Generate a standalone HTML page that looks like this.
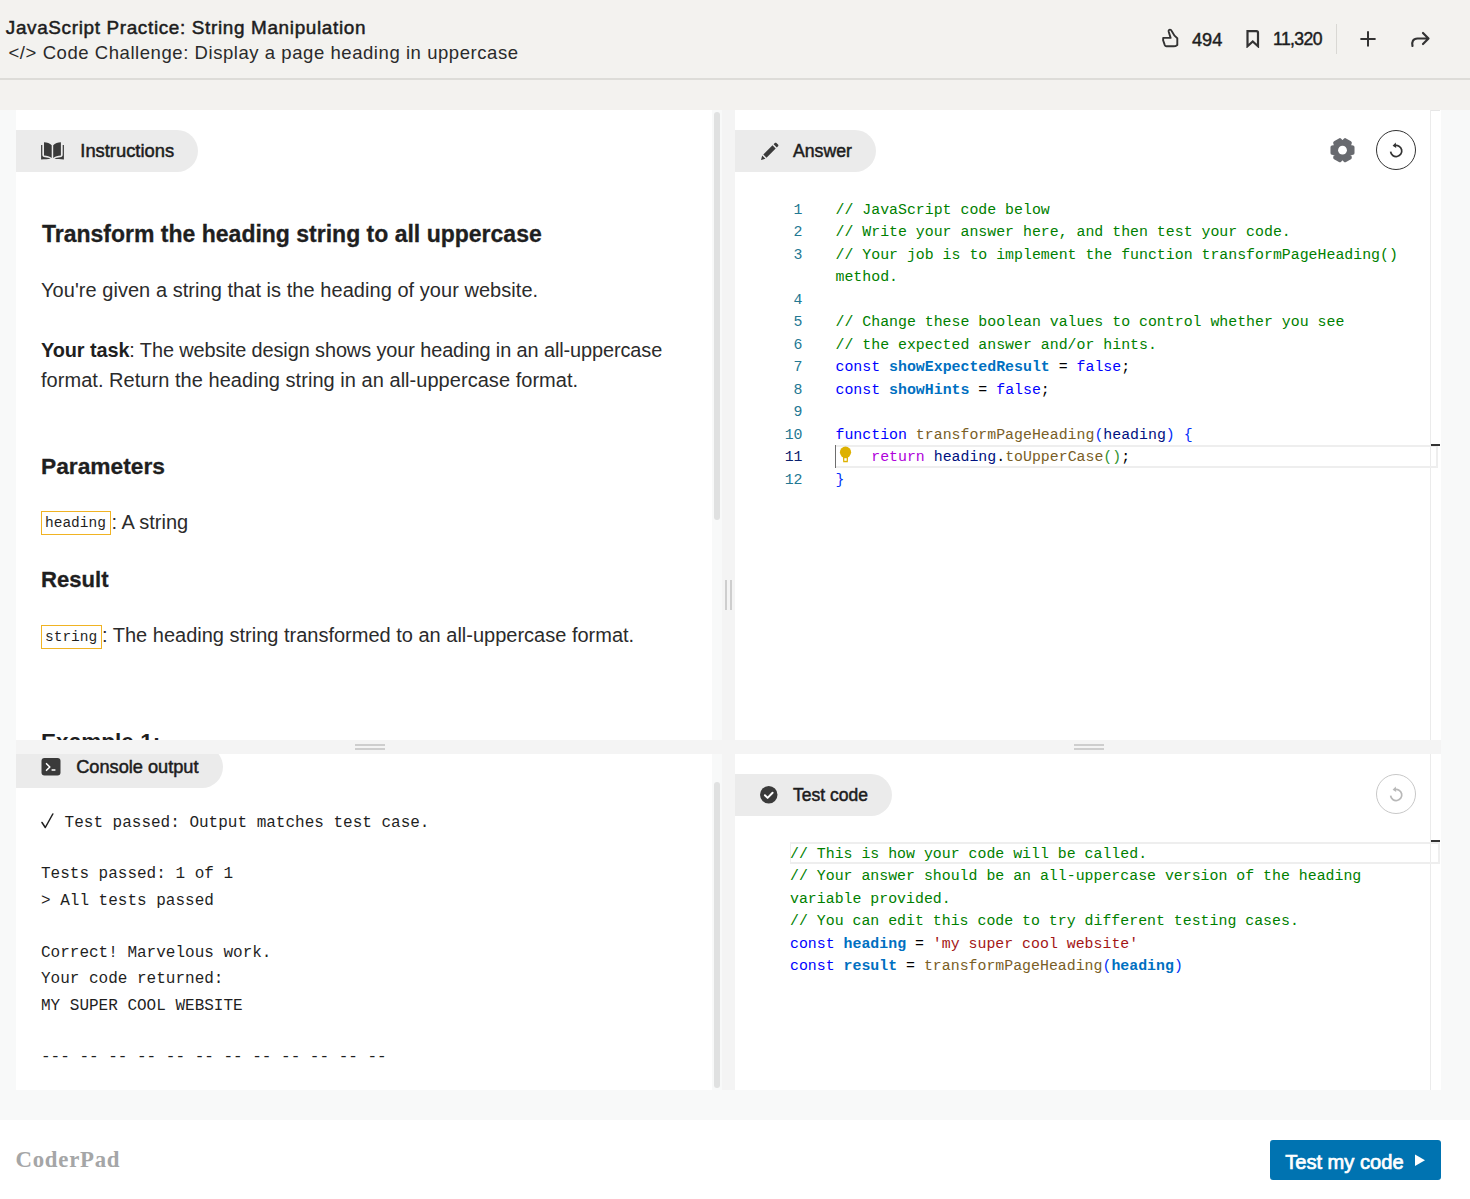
<!DOCTYPE html><html><head><meta charset="utf-8"><style>
html,body{margin:0;padding:0;width:1470px;height:1199px;overflow:hidden;background:#fff;font-family:"Liberation Sans",sans-serif}
#r>div,#r>svg{position:absolute;box-sizing:content-box}
</style></head><body><div id="r" style="position:relative;width:1470px;height:1199px;overflow:hidden">
<div style="left:0px;top:0px;width:1470px;height:78px;background:#f3f2ef;"></div>
<div style="left:0px;top:78px;width:1470px;height:2px;background:#dddcd8;"></div>
<div style="left:0px;top:80px;width:1470px;height:30px;background:#f3f2ef;"></div>
<div style="left:0px;top:110px;width:1470px;height:980px;background:#f8f9f9;"></div>
<div style="left:0px;top:1090px;width:1470px;height:30px;background:#f8f9f9;"></div>
<div style="left:0px;top:1120px;width:1470px;height:79px;background:#ffffff;"></div>
<div style="left:5.8px;top:15.45px;font-family:'Liberation Sans', sans-serif;font-size:18.9px;line-height:25px;font-weight:400;color:#1d1d1d;letter-spacing:0.66px;white-space:pre;-webkit-text-stroke:0.5px #1d1d1d;">JavaScript Practice: String Manipulation</div>
<div style="left:8.5px;top:40.59px;font-family:'Liberation Sans', sans-serif;font-size:18.5px;line-height:24px;font-weight:400;color:#2a2a2a;letter-spacing:0.56px;white-space:pre;">&lt;/&gt; Code Challenge: Display a page heading in uppercase</div>
<svg style="left:1160px;top:27px" width="22" height="23" viewBox="0 0 22 23"><path d="M3.2 10.9 L10.6 10.9 L8.7 4.8 C8.3 3.4 9.1 2.6 10 2.6 C10.9 2.6 11.4 3.3 11.9 4.3 C13.3 7.3 15.1 9.6 17.3 11.3 L17.3 17.9 C16.2 18.8 15.1 19.3 13.6 19.3 L6.4 19.3 C5.6 19.3 5.1 18.8 4.8 18.1 L3.1 13.2 Z" fill="none" stroke="#333" stroke-width="1.9" stroke-linejoin="round"/></svg>
<div style="left:1192px;top:27.69px;font-family:'Liberation Sans', sans-serif;font-size:18.2px;line-height:24px;font-weight:400;color:#1d1d1d;white-space:pre;-webkit-text-stroke:0.45px #1d1d1d;">494</div>
<svg style="left:1246px;top:30px" width="14" height="18" viewBox="0 0 14 18"><path d="M1.5 1.2 H10.5 Q12 1.2 12 2.7 V16.2 L6.75 11.4 L1.5 16.2 Z" fill="none" stroke="#333" stroke-width="2.2" stroke-linejoin="miter"/></svg>
<div style="left:1273px;top:28.40px;font-family:'Liberation Sans', sans-serif;font-size:17.6px;line-height:23px;font-weight:400;color:#1d1d1d;letter-spacing:-0.6px;white-space:pre;-webkit-text-stroke:0.45px #1d1d1d;">11,320</div>
<div style="left:1336px;top:24px;width:1px;height:30px;background:#d9d8d4;"></div>
<svg style="left:1359px;top:30px" width="18" height="18" viewBox="0 0 18 18"><path d="M9 1.2 V16.6 M1.4 8.9 H16.6" stroke="#333" stroke-width="2"/></svg>
<svg style="left:1409px;top:30px" width="22" height="18" viewBox="0 0 22 18"><path d="M3.5 16 C2.5 12 4 8.5 8.5 8.5 H19 M14 3 L19.5 8.5 L14 14" fill="none" stroke="#333" stroke-width="2.2" stroke-linecap="round" stroke-linejoin="round"/></svg>
<div style="left:16px;top:110px;width:696px;height:630px;background:#ffffff;"></div>
<div style="left:712px;top:110px;width:10px;height:630px;background:#f8f9f9;"></div>
<div style="left:714px;top:112px;width:6px;height:408px;background:#e0e1e1;border-radius:3px;"></div>
<div style="left:722px;top:110px;width:13px;height:980px;background:#f4f4f4;"></div>
<div style="left:725px;top:580px;width:2px;height:30px;background:#cecece;"></div>
<div style="left:730px;top:580px;width:2px;height:30px;background:#cecece;"></div>
<div style="left:735px;top:110px;width:706px;height:630px;background:#ffffff;"></div>
<div style="left:1430px;top:110px;width:1px;height:630px;background:#ebebeb;"></div>
<div style="left:1431px;top:110px;width:9px;height:1px;background:#e6e6e6;"></div>
<div style="left:16px;top:740px;width:1425px;height:14px;background:#f4f4f4;"></div>
<div style="left:355px;top:744px;width:30px;height:2px;background:#cecece;"></div>
<div style="left:355px;top:748px;width:30px;height:2px;background:#cecece;"></div>
<div style="left:1074px;top:744px;width:30px;height:2px;background:#cecece;"></div>
<div style="left:1074px;top:748px;width:30px;height:2px;background:#cecece;"></div>
<div style="left:16px;top:754px;width:696px;height:336px;background:#ffffff;"></div>
<div style="left:712px;top:754px;width:10px;height:336px;background:#f8f9f9;"></div>
<div style="left:714px;top:782px;width:6px;height:306px;background:#e0e1e1;border-radius:3px;"></div>
<div style="left:735px;top:754px;width:706px;height:336px;background:#ffffff;"></div>
<div style="left:1430px;top:754px;width:1px;height:336px;background:#ebebeb;"></div>
<div style="left:722px;top:740px;width:13px;height:14px;background:#f4f4f4;"></div>
<div style="left:16px;top:130px;width:182px;height:42px;background:#ebebeb;border-radius:0 21px 21px 0;"></div>
<div style="left:80.3px;top:139.24px;font-family:'Liberation Sans', sans-serif;font-size:18.35px;line-height:24px;font-weight:400;color:#1d1d1d;white-space:pre;-webkit-text-stroke:0.5px #1d1d1d;">Instructions</div>
<div style="left:735px;top:130px;width:141px;height:42px;background:#ebebeb;border-radius:0 21px 21px 0;"></div>
<div style="left:793.0px;top:140.08px;font-family:'Liberation Sans', sans-serif;font-size:17.65px;line-height:23px;font-weight:400;color:#1d1d1d;white-space:pre;-webkit-text-stroke:0.5px #1d1d1d;">Answer</div>
<div style="left:16px;top:754px;width:207px;height:34px;overflow:hidden"><div style="position:absolute;left:0;top:-8px;width:207px;height:42px;background:#ebebeb;border-radius:0 21px 21px 0"></div></div>
<div style="left:76.2px;top:755.49px;font-family:'Liberation Sans', sans-serif;font-size:18.2px;line-height:24px;font-weight:400;color:#1d1d1d;white-space:pre;-webkit-text-stroke:0.5px #1d1d1d;">Console output</div>
<div style="left:735px;top:774px;width:157px;height:42px;background:#ebebeb;border-radius:0 21px 21px 0;"></div>
<div style="left:793.0px;top:783.94px;font-family:'Liberation Sans', sans-serif;font-size:17.5px;line-height:23px;font-weight:400;color:#1d1d1d;white-space:pre;-webkit-text-stroke:0.5px #1d1d1d;">Test code</div>
<svg style="left:38px;top:138px" width="30" height="25" viewBox="0 0 30 25"><path d="M6 4.2 C9 4.2 12 5 13.7 7.3 L13.7 20 C12 18.5 9 17.6 6 17.6 Z M22.9 4.2 C19.9 4.2 16.9 5 15.2 7.3 L15.2 20 C16.9 18.5 19.9 17.6 22.9 17.6 Z M3.1 7 L4.3 7 L4.3 16.5 C4.3 18.3 5.2 19 7 19.2 C9 19.4 11 19.8 12.5 20.6 C10 21.2 7 21.5 3.1 21.5 Z M25.9 7 L24.7 7 L24.7 16.5 C24.7 18.3 23.8 19 22 19.2 C20 19.4 18 19.8 16.5 20.6 C19 21.2 22 21.5 25.9 21.5 Z" fill="#3a3a3a"/></svg>
<svg style="left:758.5px;top:141.5px" width="20" height="20" viewBox="0 0 20 20"><path d="M2 18 L3.2 13.6 L6.4 16.8 Z M4.3 12.5 L13.5 3.3 L16.7 6.5 L7.5 15.7 Z M14.6 2.2 L15.8 1 C16.3 0.5 16.9 0.5 17.4 1 L19 2.6 C19.5 3.1 19.5 3.7 19 4.2 L17.8 5.4 Z" fill="#3a3a3a"/></svg>
<svg style="left:41px;top:758px" width="20" height="18" viewBox="0 0 20 18"><rect x="0.5" y="0" width="19" height="17.5" rx="3" fill="#3a3a3a"/><path d="M5.5 5.7 L8.8 9.0 L5.5 12.3" fill="none" stroke="#fff" stroke-width="1.6" stroke-linecap="round" stroke-linejoin="round"/><path d="M11.1 12.0 H13.9" stroke="#fff" stroke-width="1.5" stroke-linecap="round"/></svg>
<svg style="left:760px;top:786px" width="18" height="18" viewBox="0 0 18 18"><circle cx="8.75" cy="8.75" r="8.75" fill="#3a3a3a"/><path d="M4.9 9.3 L7.6 11.9 L12.6 6.8" fill="none" stroke="#fff" stroke-width="2" stroke-linecap="round" stroke-linejoin="round"/></svg>
<svg style="left:1329px;top:137px" width="27" height="27" viewBox="0 0 27 27"><path d="M20.17 9.56 L23.72 10.37 L23.72 16.03 L20.17 16.84 L19.99 17.15 L21.06 20.63 L16.16 23.46 L13.68 20.80 L13.32 20.80 L10.84 23.46 L5.94 20.63 L7.01 17.15 L6.83 16.84 L3.28 16.03 L3.28 10.37 L6.83 9.56 L7.01 9.25 L5.94 5.77 L10.84 2.94 L13.32 5.60 L13.68 5.60 L16.16 2.94 L21.06 5.77 L19.99 9.25 Z" fill="#686a6f" stroke="#686a6f" stroke-width="3.6" stroke-linejoin="round"/><circle cx="13.5" cy="13.2" r="4.4" fill="#fff"/></svg>
<svg style="left:1376px;top:130px" width="40" height="40" viewBox="0 0 40 40"><circle cx="20" cy="20" r="19.5" fill="#fff" stroke="#333" stroke-width="1"/><path d="M14.6 21.6 A5.6 5.6 0 1 0 18.6 15.6" fill="none" stroke="#333" stroke-width="1.7"/><path d="M16.6 15.8 L19.8 12.6 L20.2 18.1 Z" fill="#333"/></svg>
<svg style="left:1376px;top:774px" width="40" height="40" viewBox="0 0 40 40"><circle cx="20" cy="20" r="19.5" fill="#fff" stroke="#c8c8c8" stroke-width="1"/><path d="M14.6 21.6 A5.6 5.6 0 1 0 18.6 15.6" fill="none" stroke="#b8b8b8" stroke-width="1.7"/><path d="M16.6 15.8 L19.8 12.6 L20.2 18.1 Z" fill="#b8b8b8"/></svg>
<div style="left:42px;top:219.23px;font-family:'Liberation Sans', sans-serif;font-size:23.0px;line-height:30px;font-weight:700;color:#1f1f1f;white-space:pre;-webkit-text-stroke:0.3px #1f1f1f;">Transform the heading string to all uppercase</div>
<div style="left:41px;top:276.78px;font-family:'Liberation Sans', sans-serif;font-size:19.98px;line-height:26px;font-weight:400;color:#2b2b2b;letter-spacing:0.06px;white-space:pre;">You're given a string that is the heading of your website.</div>
<div style="left:41px;top:336.60px;font-family:'Liberation Sans', sans-serif;font-size:19.9px;line-height:26px;font-weight:400;color:#2b2b2b;letter-spacing:-0.09px;white-space:pre;"><b style="color:#1f1f1f">Your task</b>: The website design shows your heading in an all-uppercase</div>
<div style="left:41px;top:366.57px;font-family:'Liberation Sans', sans-serif;font-size:20.0px;line-height:26px;font-weight:400;color:#2b2b2b;letter-spacing:0.04px;white-space:pre;">format. Return the heading string in an all-uppercase format.</div>
<div style="left:41px;top:451.32px;font-family:'Liberation Sans', sans-serif;font-size:22.75px;line-height:30px;font-weight:700;color:#1f1f1f;white-space:pre;-webkit-text-stroke:0.3px #1f1f1f;">Parameters</div>
<div style="left:41px;top:511px;width:68px;height:22px;background:#fff;border:1px solid #f0b323;"></div>
<div style="left:45px;top:514.44px;font-family:'Liberation Mono', monospace;font-size:14.5px;line-height:19px;font-weight:400;color:#1f1f1f;white-space:pre;">heading</div>
<div style="left:111.5px;top:509.17px;font-family:'Liberation Sans', sans-serif;font-size:20.0px;line-height:26px;font-weight:400;color:#2b2b2b;white-space:pre;">: A string</div>
<div style="left:41px;top:565.34px;font-family:'Liberation Sans', sans-serif;font-size:22.1px;line-height:29px;font-weight:700;color:#1f1f1f;white-space:pre;-webkit-text-stroke:0.3px #1f1f1f;">Result</div>
<div style="left:41px;top:625px;width:59px;height:21.5px;background:#fff;border:1px solid #f0b323;"></div>
<div style="left:45px;top:628.44px;font-family:'Liberation Mono', monospace;font-size:14.5px;line-height:19px;font-weight:400;color:#1f1f1f;white-space:pre;">string</div>
<div style="left:102px;top:621.57px;font-family:'Liberation Sans', sans-serif;font-size:20.0px;line-height:26px;font-weight:400;color:#2b2b2b;white-space:pre;">: The heading string transformed to an all-uppercase format.</div>
<div style="left:16px;top:700px;width:696px;height:40px;overflow:hidden"><div style="position:absolute;left:25px;font-family:'Liberation Sans', sans-serif;font-weight:700;font-size:22.6px;line-height:30px;color:#1f1f1f;top:27.47px;white-space:pre">Example 1:</div></div>
<div style="left:45.4px;top:812.74px;font-family:'Liberation Mono', monospace;font-size:16.0px;line-height:21px;font-weight:400;color:#1f1f1f;white-space:pre;">  Test passed: Output matches test case.</div>
<div style="left:41px;top:864.44px;font-family:'Liberation Mono', monospace;font-size:16.0px;line-height:21px;font-weight:400;color:#1f1f1f;white-space:pre;">Tests passed: 1 of 1</div>
<div style="left:41px;top:891.04px;font-family:'Liberation Mono', monospace;font-size:16.0px;line-height:21px;font-weight:400;color:#1f1f1f;white-space:pre;">&gt; All tests passed</div>
<div style="left:41px;top:942.64px;font-family:'Liberation Mono', monospace;font-size:16.0px;line-height:21px;font-weight:400;color:#1f1f1f;white-space:pre;">Correct! Marvelous work.</div>
<div style="left:41px;top:969.04px;font-family:'Liberation Mono', monospace;font-size:16.0px;line-height:21px;font-weight:400;color:#1f1f1f;white-space:pre;">Your code returned:</div>
<div style="left:41px;top:996.14px;font-family:'Liberation Mono', monospace;font-size:16.0px;line-height:21px;font-weight:400;color:#1f1f1f;white-space:pre;">MY SUPER COOL WEBSITE</div>
<div style="left:41px;top:1047.24px;font-family:'Liberation Mono', monospace;font-size:16.0px;line-height:21px;font-weight:400;color:#1f1f1f;white-space:pre;">--- -- -- -- -- -- -- -- -- -- -- --</div>
<svg style="left:41px;top:813px" width="13" height="16" viewBox="0 0 13 16"><path d="M1 9.5 L4.3 14.5 L11.8 1" fill="none" stroke="#1f1f1f" stroke-width="1.5" stroke-linecap="round" stroke-linejoin="round"/></svg>
<div style="left:835px;top:445px;width:601px;height:19px;background:transparent;border:2px solid #eeeeee;border-left-width:0;"></div>
<div style="left:835px;top:445px;width:1.2px;height:23px;background:#6e6e6e;"></div>
<div style="left:1431px;top:444px;width:9px;height:2px;background:#333;"></div>
<div style="left:835.5px;top:200.83px;font-family:'Liberation Mono', monospace;font-size:14.88px;line-height:19px;font-weight:400;color:#000;white-space:pre;"><span style="color:#008000">// JavaScript code below</span></div>
<div style="left:835.5px;top:223.33px;font-family:'Liberation Mono', monospace;font-size:14.88px;line-height:19px;font-weight:400;color:#000;white-space:pre;"><span style="color:#008000">// Write your answer here, and then test your code.</span></div>
<div style="left:835.5px;top:245.83px;font-family:'Liberation Mono', monospace;font-size:14.88px;line-height:19px;font-weight:400;color:#000;white-space:pre;"><span style="color:#008000">// Your job is to implement the function transformPageHeading()</span></div>
<div style="left:835.5px;top:268.33px;font-family:'Liberation Mono', monospace;font-size:14.88px;line-height:19px;font-weight:400;color:#000;white-space:pre;"><span style="color:#008000">method.</span></div>
<div style="left:835.5px;top:313.33px;font-family:'Liberation Mono', monospace;font-size:14.88px;line-height:19px;font-weight:400;color:#000;white-space:pre;"><span style="color:#008000">// Change these boolean values to control whether you see</span></div>
<div style="left:835.5px;top:335.83px;font-family:'Liberation Mono', monospace;font-size:14.88px;line-height:19px;font-weight:400;color:#000;white-space:pre;"><span style="color:#008000">// the expected answer and/or hints.</span></div>
<div style="left:835.5px;top:358.33px;font-family:'Liberation Mono', monospace;font-size:14.88px;line-height:19px;font-weight:400;color:#000;white-space:pre;"><span style="color:#0000ff">const</span> <span style="color:#0070c1;font-weight:700">showExpectedResult</span> = <span style="color:#0000ff">false</span>;</div>
<div style="left:835.5px;top:380.83px;font-family:'Liberation Mono', monospace;font-size:14.88px;line-height:19px;font-weight:400;color:#000;white-space:pre;"><span style="color:#0000ff">const</span> <span style="color:#0070c1;font-weight:700">showHints</span> = <span style="color:#0000ff">false</span>;</div>
<div style="left:835.5px;top:425.83px;font-family:'Liberation Mono', monospace;font-size:14.88px;line-height:19px;font-weight:400;color:#000;white-space:pre;"><span style="color:#0000ff">function</span> <span style="color:#795e26">transformPageHeading</span><span style="color:#0431fa">(</span><span style="color:#001080">heading</span><span style="color:#0431fa">)</span> <span style="color:#0431fa">{</span></div>
<div style="left:835.5px;top:448.33px;font-family:'Liberation Mono', monospace;font-size:14.88px;line-height:19px;font-weight:400;color:#000;white-space:pre;">    <span style="color:#af00db">return</span> <span style="color:#001080">heading</span>.<span style="color:#795e26">toUpperCase</span><span style="color:#319331">()</span>;</div>
<div style="left:835.5px;top:470.83px;font-family:'Liberation Mono', monospace;font-size:14.88px;line-height:19px;font-weight:400;color:#000;white-space:pre;"><span style="color:#0431fa">}</span></div>
<div style="left:770px;width:32.5px;text-align:right;top:200.83px;font-family:'Liberation Mono', monospace;font-size:14.88px;line-height:19px;color:#237893">1</div>
<div style="left:770px;width:32.5px;text-align:right;top:223.33px;font-family:'Liberation Mono', monospace;font-size:14.88px;line-height:19px;color:#237893">2</div>
<div style="left:770px;width:32.5px;text-align:right;top:245.83px;font-family:'Liberation Mono', monospace;font-size:14.88px;line-height:19px;color:#237893">3</div>
<div style="left:770px;width:32.5px;text-align:right;top:290.83px;font-family:'Liberation Mono', monospace;font-size:14.88px;line-height:19px;color:#237893">4</div>
<div style="left:770px;width:32.5px;text-align:right;top:313.33px;font-family:'Liberation Mono', monospace;font-size:14.88px;line-height:19px;color:#237893">5</div>
<div style="left:770px;width:32.5px;text-align:right;top:335.83px;font-family:'Liberation Mono', monospace;font-size:14.88px;line-height:19px;color:#237893">6</div>
<div style="left:770px;width:32.5px;text-align:right;top:358.33px;font-family:'Liberation Mono', monospace;font-size:14.88px;line-height:19px;color:#237893">7</div>
<div style="left:770px;width:32.5px;text-align:right;top:380.83px;font-family:'Liberation Mono', monospace;font-size:14.88px;line-height:19px;color:#237893">8</div>
<div style="left:770px;width:32.5px;text-align:right;top:403.33px;font-family:'Liberation Mono', monospace;font-size:14.88px;line-height:19px;color:#237893">9</div>
<div style="left:770px;width:32.5px;text-align:right;top:425.83px;font-family:'Liberation Mono', monospace;font-size:14.88px;line-height:19px;color:#237893">10</div>
<div style="left:770px;width:32.5px;text-align:right;top:448.33px;font-family:'Liberation Mono', monospace;font-size:14.88px;line-height:19px;color:#0b216f">11</div>
<div style="left:770px;width:32.5px;text-align:right;top:470.83px;font-family:'Liberation Mono', monospace;font-size:14.88px;line-height:19px;color:#237893">12</div>
<svg style="left:839px;top:446px" width="14" height="18" viewBox="0 0 14 18"><circle cx="6.5" cy="6.2" r="5.6" fill="#ddb100"/><path d="M3.8 10 L4.2 16.3 H8.8 L9.2 10 Z" fill="#ddb100"/><rect x="5.3" y="12.2" width="2.4" height="2.6" fill="#fff"/></svg>
<div style="left:790px;top:842px;width:647px;height:17.5px;background:transparent;border:2px solid #eeeeee;border-left:1px solid #eeeeee;"></div>
<div style="left:1431px;top:840px;width:9px;height:2px;background:#333;"></div>
<div style="left:790px;top:845.03px;font-family:'Liberation Mono', monospace;font-size:14.88px;line-height:19px;font-weight:400;color:#000;white-space:pre;"><span style="color:#008000">// This is how your code will be called.</span></div>
<div style="left:790px;top:867.43px;font-family:'Liberation Mono', monospace;font-size:14.88px;line-height:19px;font-weight:400;color:#000;white-space:pre;"><span style="color:#008000">// Your answer should be an all-uppercase version of the heading</span></div>
<div style="left:790px;top:889.83px;font-family:'Liberation Mono', monospace;font-size:14.88px;line-height:19px;font-weight:400;color:#000;white-space:pre;"><span style="color:#008000">variable provided.</span></div>
<div style="left:790px;top:912.23px;font-family:'Liberation Mono', monospace;font-size:14.88px;line-height:19px;font-weight:400;color:#000;white-space:pre;"><span style="color:#008000">// You can edit this code to try different testing cases.</span></div>
<div style="left:790px;top:934.63px;font-family:'Liberation Mono', monospace;font-size:14.88px;line-height:19px;font-weight:400;color:#000;white-space:pre;"><span style="color:#0000ff">const</span> <span style="color:#0070c1;font-weight:700">heading</span> = <span style="color:#a31515">'my super cool website'</span></div>
<div style="left:790px;top:957.03px;font-family:'Liberation Mono', monospace;font-size:14.88px;line-height:19px;font-weight:400;color:#000;white-space:pre;"><span style="color:#0000ff">const</span> <span style="color:#0070c1;font-weight:700">result</span> = <span style="color:#795e26">transformPageHeading</span><span style="color:#0431fa">(</span><span style="color:#0070c1;font-weight:700">heading</span><span style="color:#0431fa">)</span></div>
<div style="left:15.5px;top:1144.61px;font-family:'Liberation Serif', serif;font-size:22.8px;line-height:30px;font-weight:700;color:#a5a6a7;letter-spacing:0.75px;white-space:pre;">CoderPad</div>
<div style="left:1270px;top:1140px;width:171px;height:40px;background:#0073b1;border-radius:3px;"></div>
<div style="left:1285.2px;top:1149.24px;font-family:'Liberation Sans', sans-serif;font-size:20.1px;line-height:26px;font-weight:400;color:#ffffff;white-space:pre;-webkit-text-stroke:0.7px #ffffff;">Test my code</div>
<svg style="left:1414px;top:1154px" width="12" height="13" viewBox="0 0 12 13"><path d="M1 0.5 L11 6.2 L1 12 Z" fill="#fff"/></svg>
</div></body></html>
